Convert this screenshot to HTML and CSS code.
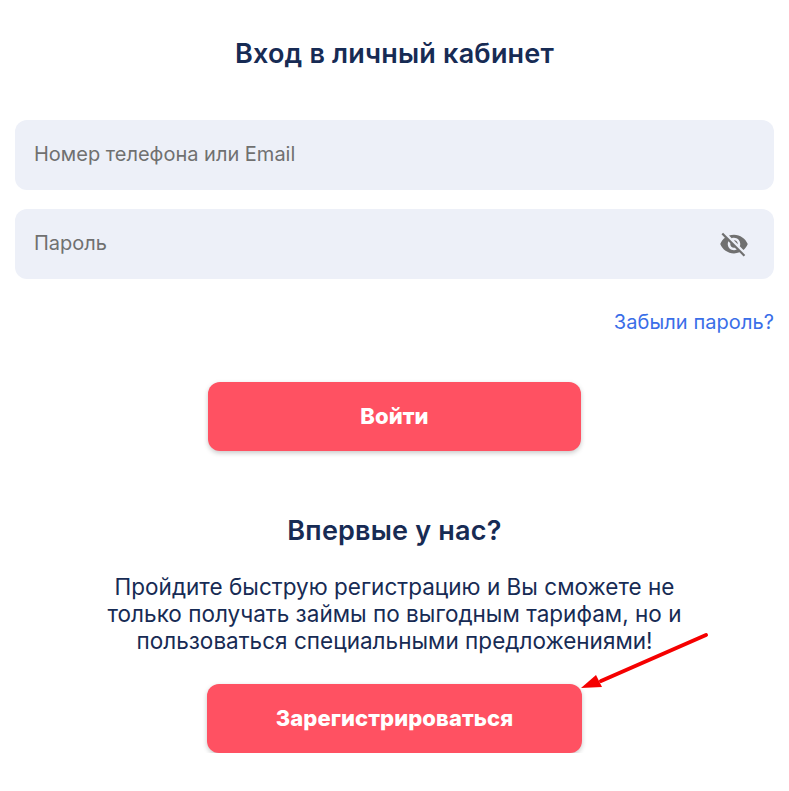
FILE: index.html
```html
<!DOCTYPE html>
<html lang="ru">
<head>
    <meta charset="UTF-8">
    <meta name="viewport" content="width=device-width, initial-scale=1.0">
    <title>Вход в личный кабинет</title>
    <link rel="stylesheet" href="styles.css">
</head>
<body>
    <main class="page">
        <h1 class="title">Вход в личный кабинет</h1>

        <form class="login-form">
            <label class="field">
                <input class="field-input" type="text" placeholder="Номер телефона или Email">
            </label>
            <label class="field">
                <input class="field-input" type="password" placeholder="Пароль">
                <svg class="eye-icon" viewBox="0 0 24 24" width="30" height="30" aria-hidden="true">
                    <path d="M12 7c2.76 0 5 2.24 5 5 0 .65-.13 1.26-.36 1.83l2.92 2.92c1.51-1.26 2.7-2.89 3.43-4.75-1.73-4.39-6-7.5-11-7.5-1.4 0-2.74.25-3.98.7l2.16 2.16C10.74 7.13 11.35 7 12 7zM2 4.27l2.28 2.28.46.46C3.08 8.3 1.78 10.02 1 12c1.73 4.39 6 7.5 11 7.5 1.55 0 3.03-.3 4.38-.84l.42.42L19.73 22 21 20.73 3.27 3 2 4.27zM7.53 9.8l1.55 1.55c-.05.21-.08.43-.08.65 0 1.66 1.34 3 3 3 .22 0 .44-.03.65-.08l1.55 1.55c-.67.33-1.41.53-2.2.53-2.76 0-5-2.24-5-5 0-.79.2-1.53.53-2.2zm4.31-.78l3.15 3.15.02-.16c0-1.66-1.34-3-3-3l-.17.01z"/>
                </svg>
            </label>
            <a class="forgot-link" href="#">Забыли пароль?</a>
            <button class="btn btn-login" type="button">Войти</button>
        </form>

        <section class="register">
            <h2 class="subtitle">Впервые у нас?</h2>
            <p class="register-text">Пройдите быструю регистрацию и Вы сможете не только получать займы по выгодным тарифам, но и пользоваться специальными предложениями!</p>
            <div class="register-action">
                <button class="btn btn-register" type="button">Зарегистрироваться</button>
                <svg class="arrow" viewBox="0 0 130 60" width="130" height="60" aria-hidden="true">
                    <line x1="125" y1="5" x2="20" y2="51" stroke="#f50000" stroke-width="4" stroke-linecap="round"/>
                    <polygon points="0,58 15,45 21,57" fill="#f50000"/>
                </svg>
            </div>
        </section>
    </main>
</body>
</html>
```

FILE: styles.css
```css
* {
    box-sizing: border-box;
}

body {
    margin: 0;
    background-color: #fff;
    font-family: Inter, "Noto Sans", sans-serif;
    color: #172b54;
}

.page {
    display: flex;
    flex-direction: column;
    align-items: center;
    padding: 38px 15px 0;
}

.title {
    margin: 0 0 51px;
    font-size: 27px;
    line-height: 31px;
    font-weight: 600;
    letter-spacing: 0.2px;
    text-align: center;
}

.login-form {
    width: 100%;
    display: flex;
    flex-direction: column;
}

.field {
    display: flex;
    align-items: center;
    height: 70px;
    margin-bottom: 19px;
    padding-right: 25px;
    background-color: #edf0f8;
    border-radius: 12px;
}

.field-input {
    flex: 1;
    min-width: 0;
    height: 100%;
    padding: 0 0 2px 19px;
    border: 0;
    outline: 0;
    background: transparent;
    font-family: inherit;
    font-size: 20px;
}

.field-input::placeholder {
    color: #707070;
    opacity: 1;
}

.eye-icon {
    fill: #707070;
}

.forgot-link {
    align-self: flex-end;
    margin-top: 12px;
    font-size: 20px;
    letter-spacing: 0.07px;
    line-height: 24px;
    color: #3a6ee8;
    text-decoration: none;
}

.btn {
    display: block;
    height: 69px;
    padding-bottom: 2px;
    border: 0;
    border-radius: 12px;
    background-color: #ff5162;
    box-shadow: 0 2px 5px rgba(0, 0, 0, 0.22);
    color: #fff;
    font-family: inherit;
    font-size: 22px;
    font-weight: 800;
    letter-spacing: 0.08px;
}

.btn-login {
    width: 373px;
    margin: 48px auto 0;
}

.register {
    display: flex;
    flex-direction: column;
    align-items: center;
    width: 100%;
    margin-top: 64px;
}

.subtitle {
    margin: 0 0 27px;
    font-size: 27px;
    line-height: 31px;
    font-weight: 600;
    letter-spacing: 0.2px;
    text-align: center;
}

.register-text {
    width: 600px;
    margin: 0;
    font-size: 22.5px;
    letter-spacing: 0.02px;
    line-height: 27px;
    text-align: center;
}

.register-action {
    position: relative;
    margin-top: 30px;
}

.btn-register {
    width: 375px;
}

.arrow {
    position: absolute;
    top: -54px;
    left: 374px;
}
```
